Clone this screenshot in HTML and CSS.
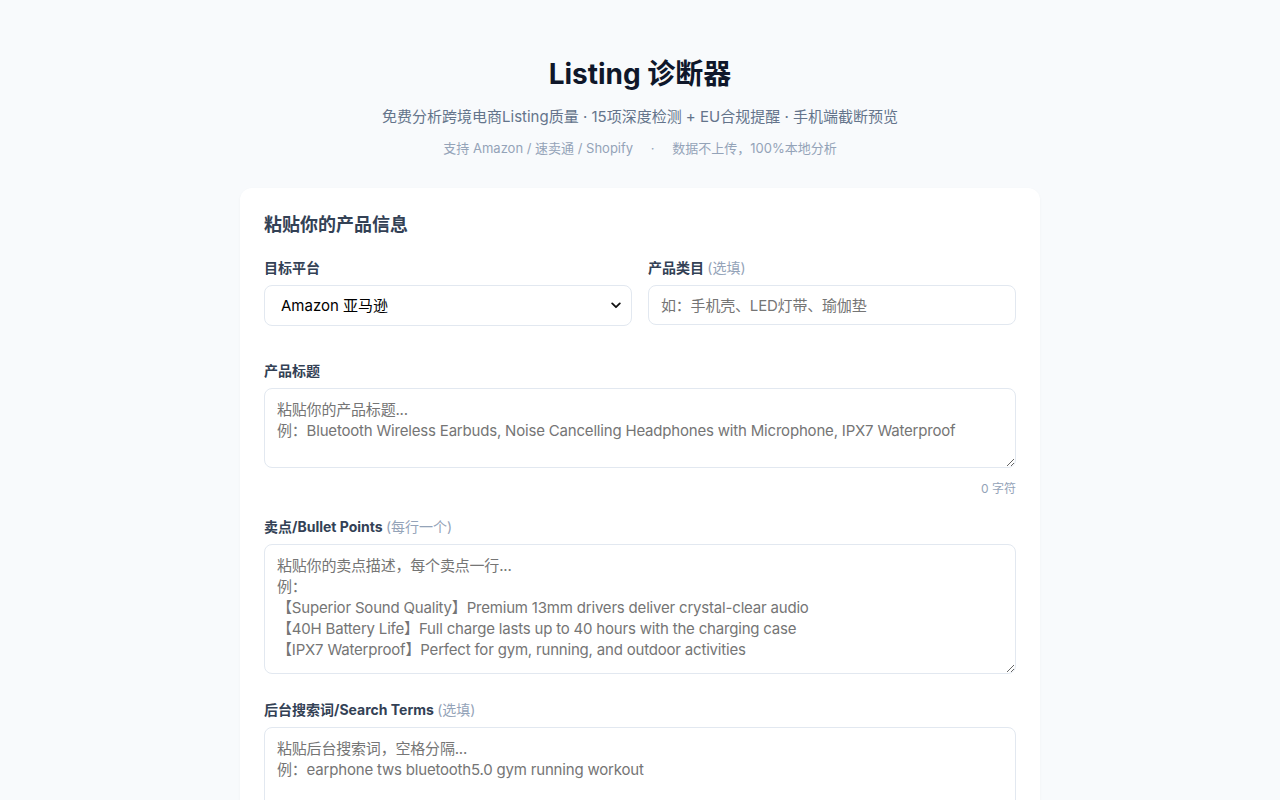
FILE: index.html
```html
<!DOCTYPE html>
<html lang="zh-CN">
<head>
<meta charset="UTF-8">
<title>Listing 诊断器</title>
<link rel="stylesheet" href="styles.css">
</head>
<body>
<div class="page">
  <header class="hero">
    <h1 class="hero-title">Listing 诊断器</h1>
    <p class="hero-sub">免费分析跨境电商Listing质量 · 15项深度检测 + EU合规提醒 · 手机端截断预览</p>
    <p class="hero-note">支持 Amazon / 速卖通 / Shopify <span class="dot">·</span> 数据不上传，100%本地分析</p>
  </header>

  <section class="card">
    <h2 class="card-title">粘贴你的产品信息</h2>

    <div class="row">
      <div class="field">
        <label class="label" for="platform">目标平台</label>
        <select id="platform" class="control select">
          <option>Amazon 亚马逊</option>
          <option>AliExpress 速卖通</option>
          <option>Shopify</option>
        </select>
      </div>
      <div class="field">
        <label class="label" for="category">产品类目 <span class="hint">(选填)</span></label>
        <input id="category" class="control" type="text" placeholder="如：手机壳、LED灯带、瑜伽垫">
      </div>
    </div>

    <div class="group group-counted">
      <label class="label" for="title">产品标题</label>
      <textarea id="title" class="control area area-title" placeholder="粘贴你的产品标题...&#10;例：Bluetooth Wireless Earbuds, Noise Cancelling Headphones with Microphone, IPX7 Waterproof"></textarea>
      <div class="count">0 字符</div>
    </div>

    <div class="group">
      <label class="label" for="bullets">卖点/Bullet Points <span class="hint">(每行一个)</span></label>
      <textarea id="bullets" class="control area area-bullets" placeholder="粘贴你的卖点描述，每个卖点一行...&#10;例：&#10;【Superior Sound Quality】Premium 13mm drivers deliver crystal-clear audio&#10;【40H Battery Life】Full charge lasts up to 40 hours with the charging case&#10;【IPX7 Waterproof】Perfect for gym, running, and outdoor activities"></textarea>
    </div>

    <div class="group">
      <label class="label" for="terms">后台搜索词/Search Terms <span class="hint">(选填)</span></label>
      <textarea id="terms" class="control area area-terms" placeholder="粘贴后台搜索词，空格分隔...&#10;例：earphone tws bluetooth5.0 gym running workout"></textarea>
    </div>
  </section>
</div>
</body>
</html>
```

FILE: styles.css
```css
* {
  box-sizing: border-box;
}

html,
body {
  margin: 0;
  padding: 0;
  background: #f8fafc;
}

body {
  font-family: Inter, "Noto Sans CJK SC", "Noto Sans", sans-serif;
  color: #0f172a;
}

.page {
  max-width: 800px;
  margin: 0 auto;
  padding: 56px 0 40px;
}

/* Header */
.hero {
  text-align: center;
  margin-bottom: 31px;
}

.hero-title {
  margin: 0;
  font-size: 28px;
  line-height: 36px;
  font-weight: 700;
  color: #0f172a;
}

.hero-sub {
  margin: 15px 0 0;
  font-size: 15px;
  line-height: 20px;
  color: #64748b;
}

.hero-note {
  margin: 12px 0 0;
  font-size: 13px;
  line-height: 18px;
  color: #94a3b8;
}

.hero-note .dot {
  margin: 0 14px;
}

/* Card */
.card {
  background: #ffffff;
  border-radius: 12px;
  padding: 24px;
  box-shadow: 0 1px 3px rgba(15, 23, 42, 0.04);
}

.card-title {
  margin: 0 0 20px;
  font-size: 18px;
  line-height: 26px;
  font-weight: 700;
  color: #334155;
}

.row {
  display: grid;
  grid-template-columns: 1fr 1fr;
  gap: 16px;
  margin-bottom: 35px;
}

.group {
  margin-bottom: 26px;
}

.group-counted {
  margin-bottom: 20px;
}

.label {
  display: block;
  margin-bottom: 8px;
  font-size: 14px;
  line-height: 19px;
  font-weight: 700;
  color: #334155;
}

.hint {
  font-weight: 400;
  color: #94a3b8;
}

.control {
  display: block;
  width: 100%;
  font-family: Inter, "Noto Sans CJK SC", sans-serif;
  font-size: 15px;
  letter-spacing: -0.19px;
  color: #111827;
  background: #ffffff;
  border: 1px solid #e2e8f0;
  border-radius: 8px;
  outline: none;
}

.control::placeholder {
  color: #757575;
  opacity: 1;
}

input.control {
  height: 40px;
  padding: 0 12px;
}

.select {
  height: 41px;
  padding: 0 30px 0 16px;
  letter-spacing: 0;
  color: #000000;
  appearance: none;
  -webkit-appearance: none;
  background-image: url("data:image/svg+xml,%3Csvg xmlns='http://www.w3.org/2000/svg' width='10' height='7' viewBox='0 0 10 7'%3E%3Cpath d='M1.2 1.4 5 5.2 8.8 1.4' fill='none' stroke='%23111' stroke-width='1.8' stroke-linecap='round' stroke-linejoin='round'/%3E%3C/svg%3E");
  background-repeat: no-repeat;
  background-position: right 10px center;
  background-size: 10px 7px;
}

.area {
  padding: 10px 12px;
  line-height: 21px;
  resize: vertical;
}

.area-title {
  height: 80px;
}

.area-bullets {
  height: 130px;
}

.area-terms {
  height: 100px;
}

.count {
  margin-top: 13px;
  text-align: right;
  font-size: 12px;
  line-height: 16px;
  color: #94a3b8;
}
```
